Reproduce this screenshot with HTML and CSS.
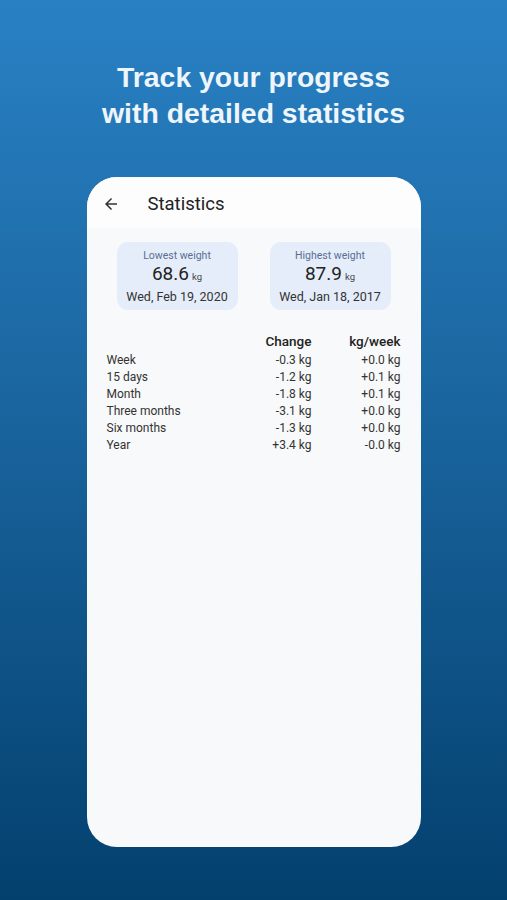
FILE: index.html
```html
<!DOCTYPE html>
<html>
<head>
<meta charset="utf-8">
<link rel="stylesheet" href="styles.css">
</head>
<body>
<h1 class="headline">Track your progress<br>with detailed statistics</h1>
<div class="phone">
  <div class="appbar">
    <svg class="back" width="18" height="18" viewBox="0 0 24 24"><path d="M20 11H7.83l5.59-5.59L12 4l-8 8 8 8 1.41-1.41L7.83 13H20v-2z" fill="#333"/></svg>
    <span class="title">Statistics</span>
  </div>
  <div class="content">
    <div class="boxes">
      <div class="box">
        <div class="label">Lowest weight</div>
        <div class="value">68.6<span class="unit">kg</span></div>
        <div class="date">Wed, Feb 19, 2020</div>
      </div>
      <div class="box">
        <div class="label">Highest weight</div>
        <div class="value">87.9<span class="unit">kg</span></div>
        <div class="date">Wed, Jan 18, 2017</div>
      </div>
    </div>
    <div class="table">
      <div class="row head"><span></span><span>Change</span><span>kg/week</span></div>
      <div class="row"><span>Week</span><span>-0.3 kg</span><span>+0.0 kg</span></div>
      <div class="row"><span>15 days</span><span>-1.2 kg</span><span>+0.1 kg</span></div>
      <div class="row"><span>Month</span><span>-1.8 kg</span><span>+0.1 kg</span></div>
      <div class="row"><span>Three months</span><span>-3.1 kg</span><span>+0.0 kg</span></div>
      <div class="row"><span>Six months</span><span>-1.3 kg</span><span>+0.0 kg</span></div>
      <div class="row"><span>Year</span><span>+3.4 kg</span><span>-0.0 kg</span></div>
    </div>
  </div>
</div>
</body>
</html>
```
FILE: styles.css
```css
html, body {
  margin: 0;
  padding: 0;
}
body {
  width: 507px;
  height: 900px;
  overflow: hidden;
  background: linear-gradient(180deg, #2981c4 0%, #1a659f 45%, #03406e 100%);
  font-family: Roboto, "Noto Sans", sans-serif;
  display: flex;
  flex-direction: column;
  align-items: center;
}
.headline {
  margin: 59px 0 0;
  color: #eef5fb;
  font-family: "Liberation Sans", Arial, sans-serif;
  font-weight: 700;
  font-size: 28.4px;
  line-height: 36px;
  text-align: center;
}
.phone {
  margin-top: 46px;
  width: 334px;
  height: 670px;
  background: #f8f9fa;
  border-radius: 30px;
  overflow: hidden;
  display: flex;
  flex-direction: column;
}
.appbar {
  height: 48px;
  padding-top: 3px;
  background: #fdfdfe;
  display: flex;
  align-items: center;
  padding-left: 15px;
  flex-shrink: 0;
}
.back {
  display: block;
}
.title {
  margin-left: 28px;
  font-size: 18.5px;
  color: #222;
}
.content {
  padding: 14px 20px 0;
}
.boxes {
  display: flex;
  justify-content: space-between;
  padding: 0 10px;
}
.box {
  width: 121px;
  height: 68px;
  background: #e5edfa;
  border-radius: 11px;
  display: flex;
  flex-direction: column;
  align-items: center;
  justify-content: center;
  color: #222;
}
.label {
  font-size: 10.5px;
  color: #5a6d95;
  line-height: 15px;
  margin-top: 1px;
}
.value {
  font-size: 19px;
  line-height: 22px;
  color: #222;
}
.unit {
  font-size: 9.5px;
  margin-left: 3px;
  color: #444;
}
.date {
  font-size: 12.5px;
  line-height: 17px;
  color: #333;
}
.table {
  margin-top: 21px;
}
.row {
  display: grid;
  grid-template-columns: 1fr 90px 89px;
  font-size: 12px;
  line-height: 17px;
  color: #333;
}
.row span:nth-child(n+2) {
  text-align: right;
}
.row.head {
  font-size: 13.5px;
  font-weight: 500;
  color: #222;
  line-height: 20px;
  margin-bottom: 1px;
}
```
